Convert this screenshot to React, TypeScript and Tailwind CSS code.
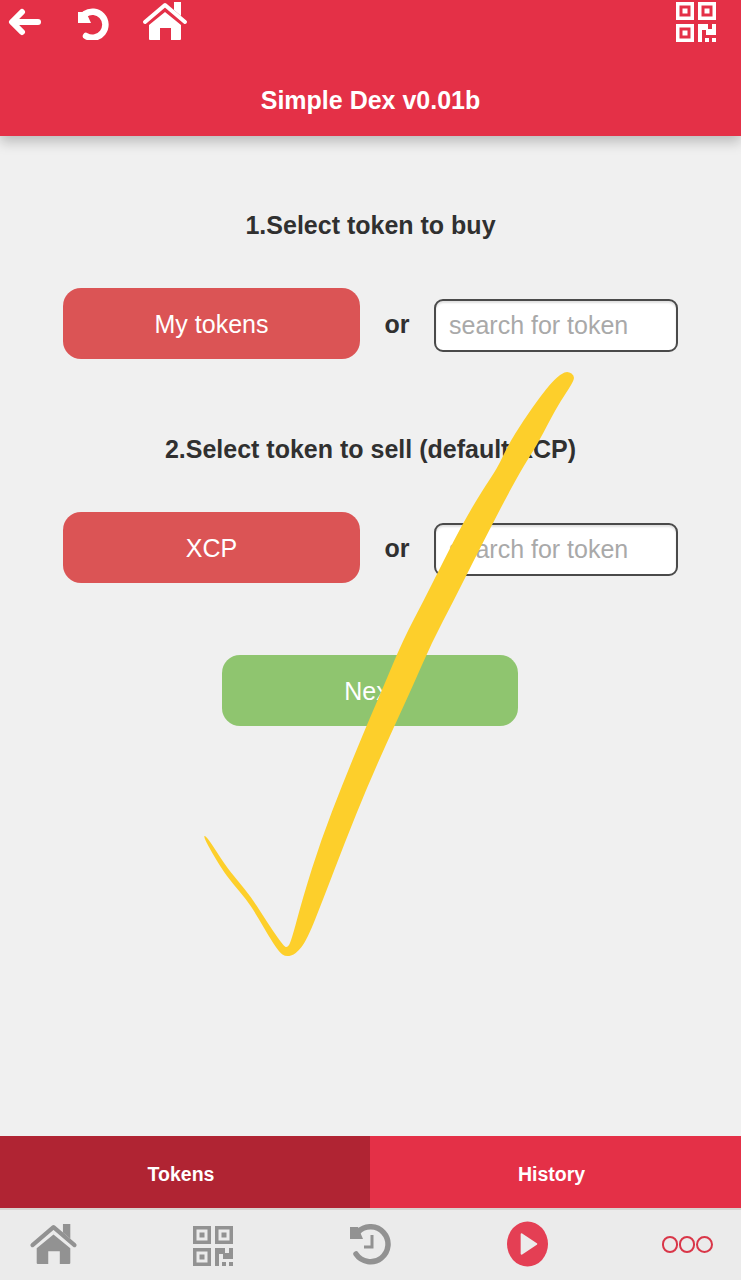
const checkPoints: [number, number][] = [
  [568, 371], [575, 376], [572, 384], [560, 402], [550, 420], [537, 445], [523, 467], [507, 496], [493, 523],
  [473, 562], [454, 600], [432, 642], [411, 690], [393, 729], [368, 785], [345, 842], [324, 897], [307, 940],
  [296, 954], [286, 957], [279, 952], [268, 935], [256, 914], [246, 899], [233, 884], [221, 868], [203, 837],
  [206, 835], [225, 865], [238, 881], [251, 897], [262, 914], [273, 931], [283, 945], [287, 948], [291, 942],
  [303, 897], [321, 840], [343, 783], [366, 727], [382, 690], [403, 640], [424, 600], [444, 560], [463, 523],
  [482, 491], [498, 467], [507, 447], [523, 421], [540, 397], [552, 382], [561, 374],
];

// quadratic curves through the midpoints, so the brush edge stays smooth
function smoothPath(points: [number, number][]) {
  const mid = (a: [number, number], b: [number, number]) => `${(a[0] + b[0]) / 2} ${(a[1] + b[1]) / 2}`;
  let d = `M${mid(points[points.length - 1], points[0])}`;
  points.forEach((p, i) => {
    d += ` Q${p[0]} ${p[1]} ${mid(p, points[(i + 1) % points.length])}`;
  });
  return d + " Z";
}

function BackArrow() {
  return (
    <svg viewBox="0 0 33 28" className="h-[28px] w-[33px]" fill="none" stroke="white" strokeWidth="6" strokeLinecap="round" strokeLinejoin="round">
      <path d="M14 4 L4 14 L14 24" />
      <path d="M5 14 H30" />
    </svg>
  );
}

function UndoIcon({ className }: { className: string }) {
  return (
    <svg viewBox="0 0 33 32" className={className} fill="none" stroke="currentColor">
      <path d="M8 6 A13 13 0 1 1 9 28" strokeWidth="6.5" strokeLinecap="round" />
      <path d="M1 4 L9 4 L14 15 H1 Z" fill="currentColor" stroke="none" />
    </svg>
  );
}

function HomeIcon({ className }: { className: string }) {
  return (
    <svg viewBox="0 0 46 40" className={className} fill="currentColor">
      <path d="M3 21 L23 4 L43 21" fill="none" stroke="currentColor" strokeWidth="4" strokeLinecap="round" strokeLinejoin="round" />
      <path d="M32 1 H39 V15 L32 9 Z" />
      <path d="M7 24 L23 11 L39 24 V38 Q39 39 38 39 H29 V27 H18 V39 H8 Q7 39 7 38 Z" />
    </svg>
  );
}

function QrIcon({ className }: { className: string }) {
  return (
    <svg viewBox="0 0 40 40" className={className} fill="currentColor">
      <path fillRule="evenodd" d="M0 0 H18 V18 H0 Z M3.5 3.5 V14.5 H14.5 V3.5 Z M6.5 6.5 H11.5 V11.5 H6.5 Z" />
      <path fillRule="evenodd" d="M22 0 H40 V18 H22 Z M25.5 3.5 V14.5 H36.5 V3.5 Z M28.5 6.5 H33.5 V11.5 H28.5 Z" />
      <path fillRule="evenodd" d="M0 22 H18 V40 H0 Z M3.5 25.5 V36.5 H14.5 V25.5 Z M6.5 28.5 H11.5 V33.5 H6.5 Z" />
      <path d="M22 22 H32 V27 H36 V22 H40 V33 H30 V28 H26 V40 H22 Z" />
      <path d="M29 36 H33 V40 H29 Z M36 36 H40 V40 H36 Z" />
    </svg>
  );
}

function HistoryIcon({ className }: { className: string }) {
  return (
    <svg viewBox="0 0 42 41" className={className} fill="none" stroke="currentColor">
      <path d="M9 8 A17.5 17.5 0 1 1 7 30" strokeWidth="5.5" strokeLinecap="round" />
      <path d="M1 3 L9 3 L14 15 H1 Z" fill="currentColor" stroke="none" />
      <path d="M23 11 V23 H15" strokeWidth="3" />
    </svg>
  );
}

function PlayIcon({ className }: { className: string }) {
  return (
    <svg viewBox="0 0 42 46" className={className}>
      <ellipse cx="21" cy="23" rx="21" ry="23" fill="#e43f54" />
      <path d="M15 13 L30 23 L15 33 Z" fill="#ececec" stroke="#ececec" strokeWidth="2" strokeLinejoin="round" />
    </svg>
  );
}

function TokenRow({ label }: { label: string }) {
  return (
    <div className="flex items-center pl-[63px]">
      <button className="h-[71px] w-[297px] rounded-[18px] bg-[#db5455] pt-[2px] text-[25px] text-white">{label}</button>
      <span className="mt-[3px] w-[74px] text-center text-[25px] font-bold text-[#303030]">or</span>
      <input
        className="mt-[4px] h-[53px] w-[244px] rounded-[9px] border-2 border-[#4a4a4a] bg-white px-[13px] text-[25px] shadow-[inset_0_2px_2px_rgba(0,0,0,0.12)] outline-none placeholder:text-[#a9a9a9]"
        placeholder="search for token"
      />
    </div>
  );
}

export default function App() {
  return (
    <div className="relative flex h-[1280px] w-[741px] flex-col overflow-hidden bg-[#f0f0f0] font-['Liberation_Sans',Arial,sans-serif]">
      <header className="relative z-10 h-[136px] shrink-0 bg-[#e43047] shadow-[0_6px_12px_rgba(0,0,0,0.22)]">
        <div className="flex h-[44px] items-start text-white">
          <div className="ml-[8px] mt-[8px]"><BackArrow /></div>
          <UndoIcon className="ml-[36px] mt-[8px] h-[32px] w-[33px]" />
          <HomeIcon className="ml-[32px] mt-[1px] h-[40px] w-[46px]" />
          <QrIcon className="ml-auto mr-[25px] mt-[2px] h-[40px] w-[40px]" />
        </div>
        <h1 className="mt-[41px] text-center text-[25px] font-bold leading-[30px] text-white">Simple Dex v0.01b</h1>
      </header>

      <main className="flex-1">
        <h2 className="mt-[74px] text-center text-[25px] font-bold leading-[30px] text-[#303030]">1.Select token to buy</h2>
        <div className="mt-[48px]"><TokenRow label="My tokens" /></div>
        <h2 className="mt-[75px] text-center text-[25px] font-bold leading-[30px] text-[#303030]">2.Select token to sell (default XCP)</h2>
        <div className="mt-[48px]"><TokenRow label="XCP" /></div>
        <div className="mt-[72px] flex justify-center pr-[1px]">
          <button className="h-[71px] w-[296px] rounded-[18px] bg-[#8fc56f] pt-[2px] text-[25px] text-white">Next</button>
        </div>
      </main>

      <div className="flex h-[72px] shrink-0 text-[19.5px] font-bold text-white">
        <div className="flex w-[370px] items-center justify-center bg-[#b02433] pr-[8px] pt-[6px]">Tokens</div>
        <div className="flex flex-1 items-center justify-center bg-[#e43047] pr-[8px] pt-[6px]">History</div>
      </div>
      <nav className="flex h-[72px] shrink-0 items-center border-t-2 border-[#d8d4d0] bg-[#ebebeb] pb-[2px] text-[#929292]">
        <HomeIcon className="ml-[29px] h-[42px] w-[49px]" />
        <QrIcon className="ml-[115px] mt-[4px] h-[40px] w-[40px]" />
        <HistoryIcon className="ml-[116px] h-[41px] w-[42px]" />
        <PlayIcon className="ml-[116px] h-[46px] w-[41px]" />
        <div className="ml-[114px] flex gap-px">
          <span className="h-[17px] w-[16px] rounded-full border-2 border-[#d93648]" />
          <span className="h-[17px] w-[16px] rounded-full border-2 border-[#d93648]" />
          <span className="h-[17px] w-[17px] rounded-full border-2 border-[#d93648]" />
        </div>
      </nav>

      {/* hand drawn check mark over the form */}
      <svg className="pointer-events-none absolute left-0 top-0 z-20" width="741" height="1280" viewBox="0 0 741 1280">
        <path fill="#fdcf2b" d={smoothPath(checkPoints)} />
      </svg>
    </div>
  );
}
